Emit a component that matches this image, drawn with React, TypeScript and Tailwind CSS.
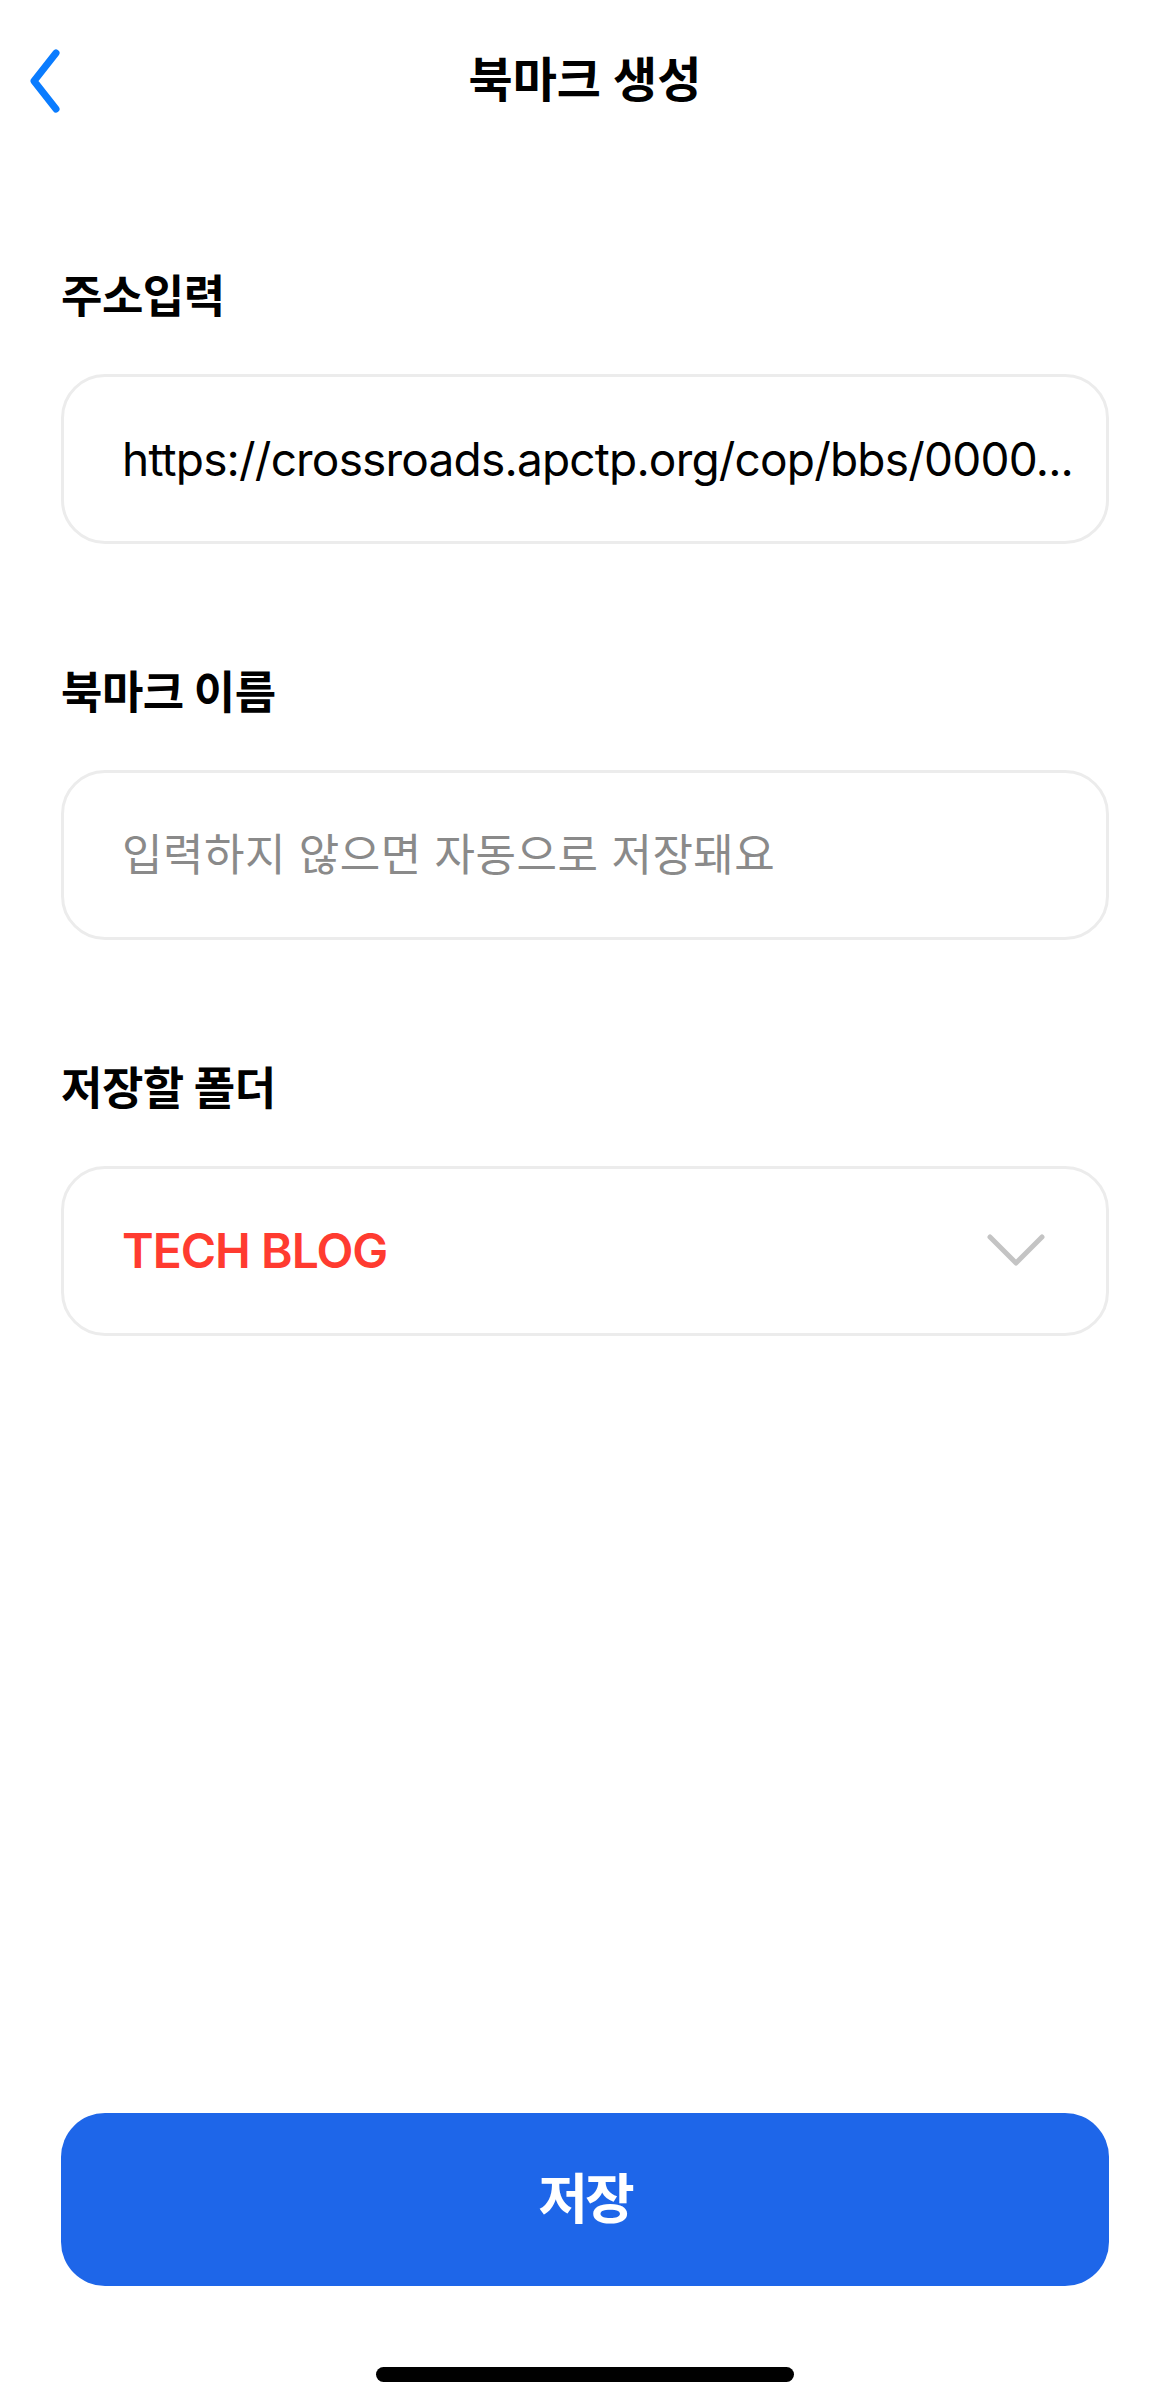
import React from 'react';

const FONT = "font-['Inter','Noto_Sans_CJK_KR',sans-serif]";

const BackIcon = () => (
  <svg width="44" height="64" viewBox="0 0 44 64" fill="none">
    <path d="M34 4 L12 32 L34 60" stroke="#0a7cff" strokeWidth="7" strokeLinecap="round" strokeLinejoin="round" />
  </svg>
);

const ChevronDown = () => (
  <svg width="60" height="36" viewBox="0 0 60 36" fill="none">
    <path d="M4 4 L30 30 L56 4" stroke="#c4c4c4" strokeWidth="5" strokeLinecap="round" strokeLinejoin="round" />
  </svg>
);

interface FieldProps {
  label: string;
  children: React.ReactNode;
  first?: boolean;
}

const Field: React.FC<FieldProps> = ({ label, children, first }) => (
  <div className={first ? 'mt-[108px]' : 'mt-[120px]'}>
    <div className="h-[58px] flex items-center text-[45px] font-bold text-black tracking-[-0.5px]">
      {label}
    </div>
    <div className="mt-[48px] h-[170px] rounded-[44px] border-[3px] border-[#ececec] bg-white flex items-center pl-[58px] pr-[6px] overflow-hidden">
      {children}
    </div>
  </div>
);

export default function App() {
  return (
    <div className={`${FONT} w-[1170px] h-[2406px] bg-white flex flex-col`}>
      <header className="relative h-[160px] flex items-center justify-center">
        <div className="absolute left-[22px] top-[49px]">
          <BackIcon />
        </div>
        <h1 className="text-[48px] font-semibold text-black">북마크 생성</h1>
      </header>

      <main className="px-[61px] flex flex-col flex-1">
        <Field label="주소입력" first>
          <span className="text-[46px] text-black whitespace-nowrap tracking-[-0.8px]">
            https://crossroads.apctp.org/cop/bbs/0000...
          </span>
        </Field>

        <Field label="북마크 이름">
          <span className="text-[44px] text-[#8a8a8a] whitespace-nowrap tracking-[0.5px]">
            입력하지 않으면 자동으로 저장돼요
          </span>
        </Field>

        <Field label="저장할 폴더">
          <div className="flex items-center justify-between w-full">
            <span className="text-[48px] font-semibold text-[#ff3b30] tracking-[-1px]">TECH BLOG</span>
            <div className="mr-[54px]">
              <ChevronDown />
            </div>
          </div>
        </Field>

        <div className="flex-1" />

        <button className="h-[173px] w-full rounded-[44px] bg-[#1e66e9] text-white text-[54px] font-semibold tracking-[-3px]">
          저장
        </button>
      </main>

      <div className="h-[120px] flex justify-center pt-[81px]">
        <div className="w-[418px] h-[15px] rounded-full bg-black" />
      </div>
    </div>
  );
}
